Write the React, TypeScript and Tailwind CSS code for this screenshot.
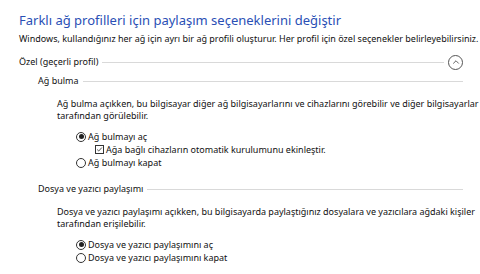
import { ChevronUp } from 'lucide-react';

function Radio({ checked, label }: { checked?: boolean; label: string }) {
  return (
    <div className="flex items-center h-[13px]">
      <span className="w-[10px] h-[10px] rounded-full border border-[#333] flex items-center justify-center mr-[2px]">
        {checked && <span className="w-[5px] h-[5px] rounded-full bg-[#222]" />}
      </span>
      <span>{label}</span>
    </div>
  );
}

function Check({ label }: { label: string }) {
  return (
    <div className="flex items-center h-[13px] pl-[19px]">
      <span className="w-[9px] h-[9px] border border-[#333] flex items-center justify-center mr-[2px]">
        <svg viewBox="0 0 9 9" className="w-[9px] h-[9px]">
          <path d="M1.5 4.5 L3.5 6.5 L7.5 2" fill="none" stroke="#222" strokeWidth="1" />
        </svg>
      </span>
      <span>{label}</span>
    </div>
  );
}

function SectionHead({ title }: { title: string }) {
  return (
    <div className="flex items-center h-[14px]">
      <span className="whitespace-nowrap">{title}</span>
      <div className="flex-1 h-px bg-[#d9d9d9] ml-[4px]" />
    </div>
  );
}

export default function App() {
  return (
    <div className="w-[480px] h-[274px] bg-white overflow-hidden text-[#111] text-[9px] leading-[12px] font-['Noto_Sans',sans-serif]">
      <div className="pl-[19px] pr-[17px] pt-[12px]">
        <h1 className="text-[13px] leading-[16px] text-[#2a4fb5] whitespace-nowrap">
          Farklı ağ profilleri için paylaşım seçeneklerini değiştir
        </h1>
        <p className="mt-[5px] whitespace-nowrap">
          Windows, kullandığınız her ağ için ayrı bir ağ profili oluşturur. Her profil için özel seçenekler belirleyebilirsiniz.
        </p>

        {/* Özel profil */}
        <div className="flex items-center h-[16px] mt-[9px]">
          <span className="whitespace-nowrap">Özel (geçerli profil)</span>
          <div className="flex-1 h-px bg-[#d9d9d9] ml-[4px] mr-[4px]" />
          <span className="w-[15px] h-[15px] rounded-full border border-[#555] flex items-center justify-center">
            <ChevronUp className="w-[10px] h-[10px] text-[#444]" strokeWidth={2} />
          </span>
        </div>

        <div className="pl-[19px]">
          <div className="mt-[4px]">
            <SectionHead title="Ağ bulma" />
          </div>
          <div className="pl-[19px]">
            <p className="mt-[10px] whitespace-nowrap">
              Ağ bulma açıkken, bu bilgisayar diğer ağ bilgisayarlarını ve cihazlarını görebilir ve diğer bilgisayarlar
              <br />
              tarafından görülebilir.
            </p>
            <div className="pl-[19px] mt-[8px]">
              <Radio checked label="Ağ bulmayı aç" />
              <Check label="Ağa bağlı cihazların otomatik kurulumunu ekinleştir." />
              <Radio label="Ağ bulmayı kapat" />
            </div>
          </div>

          <div className="mt-[13px]">
            <SectionHead title="Dosya ve yazıcı paylaşımı" />
          </div>
          <div className="pl-[19px]">
            <p className="mt-[10px] whitespace-nowrap">
              Dosya ve yazıcı paylaşımı açıkken, bu bilgisayarda paylaştığınız dosyalara ve yazıcılara ağdaki kişiler
              <br />
              tarafından erişilebilir.
            </p>
            <div className="pl-[19px] mt-[8px]">
              <Radio checked label="Dosya ve yazıcı paylaşımını aç" />
              <Radio label="Dosya ve yazıcı paylaşımını kapat" />
            </div>
          </div>
        </div>
      </div>
    </div>
  );
}
